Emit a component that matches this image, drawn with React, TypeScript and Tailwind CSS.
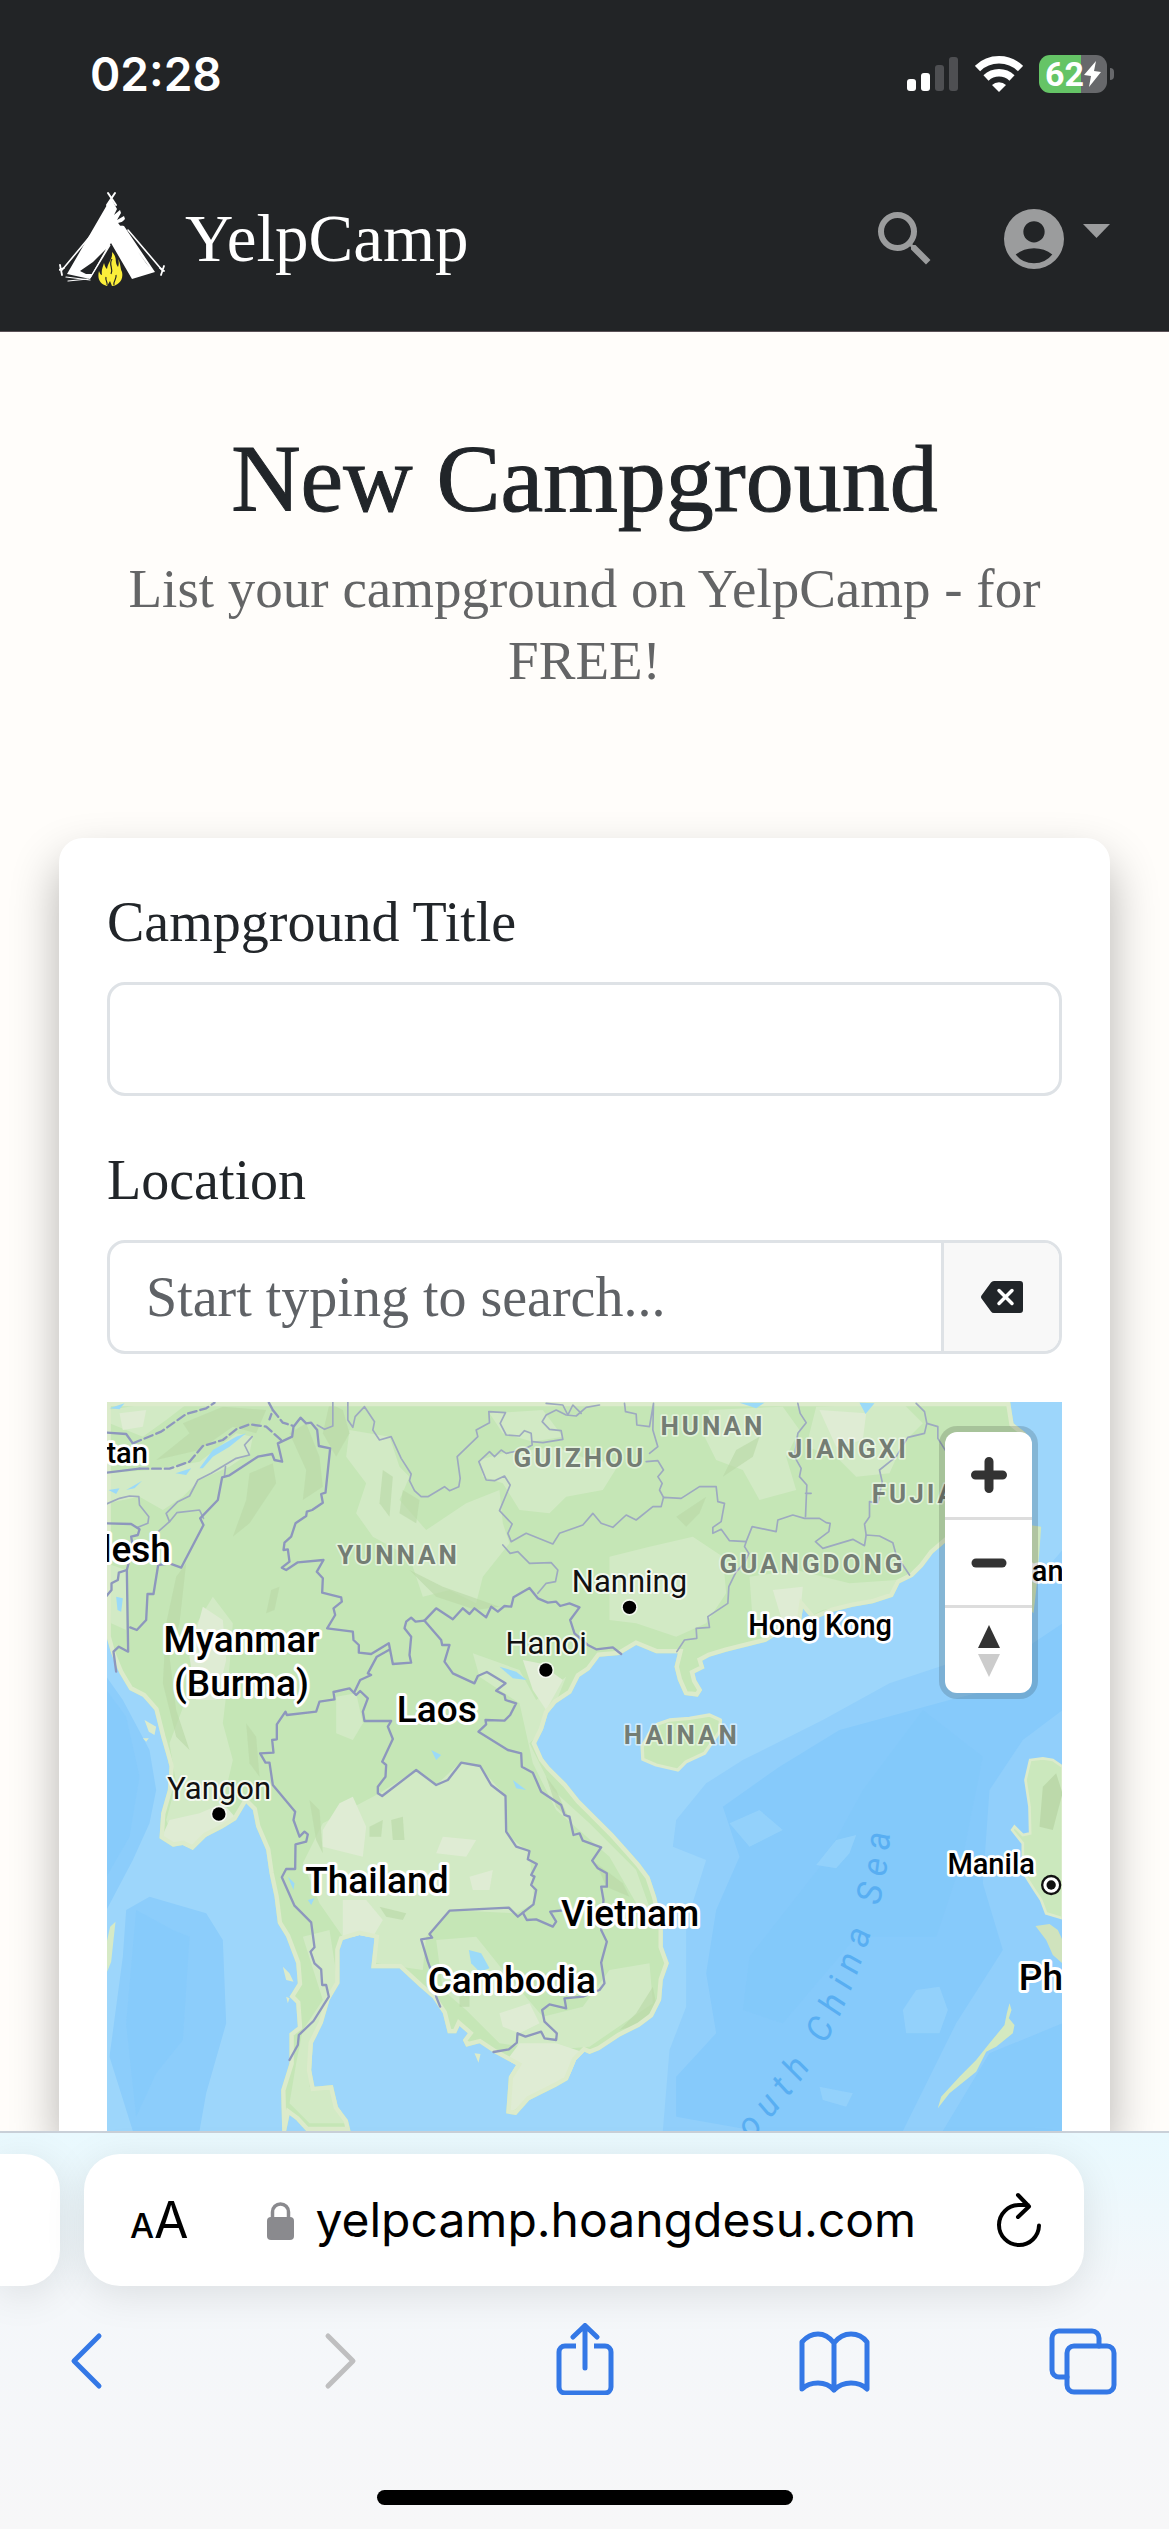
import React from "react";

const LAND =
  "M51,36 L2762,36 L2772,100 L2810,130 L2800,210 L2740,290 L2700,360 L2620,410 L2565,460 L2530,490 L2500,530 L2470,560 L2430,580 L2410,620 L2350,640 L2290,650 L2230,665 L2170,690 L2140,655 L2135,690 L2070,730 L2030,755 L1970,770 L1910,785 L1860,800 L1838,812 L1845,835 L1815,850 L1820,870 L1838,900 L1825,920 L1785,915 L1765,870 L1755,830 L1765,790 L1700,790 L1640,765 L1590,795 L1530,800 L1500,840 L1470,860 L1445,910 L1400,940 L1375,970 L1360,1020 L1340,1060 L1360,1105 L1380,1130 L1430,1180 L1470,1230 L1500,1260 L1570,1330 L1615,1380 L1650,1420 L1680,1460 L1700,1520 L1720,1610 L1720,1670 L1738,1720 L1720,1770 L1715,1830 L1690,1880 L1650,1910 L1590,1940 L1530,1980 L1500,1992 L1485,1985 L1460,2010 L1435,2070 L1400,2090 L1320,2130 L1280,2175 L1250,2170 L1258,2060 L1280,2025 L1215,1990 L1170,1960 L1130,1970 L1120,1950 L1135,1930 L1110,1908 L1100,1930 L1075,1930 L1060,1870 L1030,1825 L990,1790 L930,1735 L845,1735 L855,1645 L810,1635 L760,1650 L750,1680 L750,1780 L720,1830 L700,1900 L670,1960 L665,2040 L675,2090 L730,2085 L745,2150 L775,2190 L783,2223 L650,2223 L620,2190 L600,2175 L590,2223 L578,2223 L575,2100 L600,2020 L600,1930 L625,1910 L620,1840 L600,1820 L625,1780 L620,1720 L590,1640 L565,1600 L555,1520 L540,1450 L530,1380 L500,1310 L490,1260 L470,1240 L440,1290 L400,1315 L350,1340 L310,1380 L280,1365 L250,1370 L210,1345 L215,1270 L235,1200 L240,1130 L235,1110 L215,1040 L195,960 L160,920 L120,900 L90,850 L65,790 L51,740 Z";

const HAINAN =
  "M1705,1002 L1740,990 L1800,985 L1860,975 L1893,990 L1890,1025 L1845,1090 L1790,1115 L1765,1140 L1700,1125 L1660,1108 L1658,1070 L1680,1030 Z";

const LUZON =
  "M2822,1110 L2860,1105 L2890,1110 L2919,1130 L2919,1585 L2870,1570 L2855,1530 L2835,1500 L2800,1445 L2800,1360 L2768,1320 L2775,1310 L2800,1335 L2822,1330 L2820,1250 L2808,1170 Z";

const LIGHT = [
  "M51,60 L190,40 L300,36 L230,90 L160,140 L60,100 Z",
  "M51,250 L180,240 L330,215 L440,130 L490,140 L480,190 L420,230 L330,270 L280,320 L220,360 L150,320 L51,340 Z",
  "M51,520 L110,540 L110,720 L65,700 Z",
  "M780,120 L900,140 L930,230 L960,260 L930,330 L1010,420 L1130,340 L1230,300 L1240,400 L1260,460 L1180,560 L1160,640 L1080,600 L1000,620 L960,500 L850,440 L800,370 L830,280 L770,200 Z",
  "M1170,210 L1240,190 L1400,170 L1500,210 L1590,220 L1540,300 L1430,320 L1380,370 L1290,360 L1240,280 L1180,260 Z",
  "M1200,70 L1360,60 L1420,140 L1330,155 L1240,130 Z",
  "M1860,60 L2080,50 L2130,120 L2090,200 L2120,300 L2010,330 L1960,240 L1880,210 L1840,130 Z",
  "M2180,50 L2440,40 L2500,100 L2440,160 L2400,250 L2300,260 L2240,200 L2150,170 Z",
  "M1560,500 L1680,470 L1810,440 L1900,500 L1910,610 L1850,700 L1760,740 L1640,700 L1560,690 Z",
  "M1980,560 L2120,540 L2280,580 L2420,570 L2400,620 L2200,660 L2080,720 L1990,700 Z",
  "M370,620 L430,700 L420,830 L400,1000 L430,1110 L400,1240 L330,1330 L250,1340 L230,1290 L260,1180 L240,1060 L300,900 L310,720 Z",
  "M700,1300 L870,1210 L980,1140 L1040,1185 L1110,1120 L1170,1130 L1250,1220 L1250,1330 L1320,1390 L1335,1540 L1280,1570 L1080,1560 L1010,1640 L1000,1740 L860,1720 L850,1640 L760,1640 L690,1540 L640,1420 Z",
  "M740,920 L800,910 L820,1000 L790,1050 L740,1030 Z",
  "M640,1640 L720,1620 L745,1780 L690,1900 L660,2090 L730,2100 L770,2200 L660,2200 L600,2140 L620,2020 L640,1920 L700,1830 Z",
  "M1040,1650 L1160,1640 L1240,1740 L1360,1880 L1480,1850 L1560,1740 L1680,1720 L1690,1840 L1500,1970 L1380,1980 L1230,1960 L1130,1860 L1060,1800 Z",
  "M1150,790 L1290,840 L1340,930 L1430,860 L1370,1010 L1320,1060 L1390,1200 L1500,1300 L1640,1440 L1690,1580 L1640,1540 L1560,1400 L1400,1260 L1330,1120 L1290,940 L1170,860 Z",
];

const CREAM = [
  "M750,1240 L790,1220 L830,1310 L820,1400 L700,1370 L700,1320 Z",
  "M760,1530 L830,1530 L880,1590 L850,1640 L760,1640 Z",
  "M1060,1340 L1160,1350 L1130,1400 L1040,1390 Z",
  "M1140,1460 L1210,1440 L1200,1500 L1150,1500 Z",
  "M340,650 L400,690 L410,810 L380,930 L320,930 L300,800 Z",
  "M240,1290 L330,1270 L400,1240 L440,1285 L350,1340 L310,1378 L215,1345 Z",
  "M1260,2000 L1290,1960 L1400,1960 L1490,1990 L1430,2070 L1320,2130 L1260,2170 Z",
  "M1230,1870 L1320,1840 L1350,1900 L1290,1930 L1240,1910 Z",
  "M1300,810 L1350,820 L1420,870 L1370,960 L1330,900 Z",
  "M2050,600 L2140,590 L2130,690 L2080,700 Z",
  "M2190,60 L2330,70 L2320,150 L2240,170 Z",
  "M90,70 L170,60 L160,110 L100,120 Z",
];

const DARK = [
  "M280,100 L400,50 L530,60 L500,130 L430,110 L330,180 L200,210 L300,130 Z",
  "M600,130 L650,100 L690,200 L700,290 L640,330 L650,240 Z",
  "M480,250 L550,220 L560,280 L480,400 L430,440 L470,330 Z",
  "M260,560 L290,520 L270,700 L240,800 L260,960 L300,1080 L260,1040 L220,880 L230,700 Z",
  "M720,40 L760,60 L780,130 L740,200 L700,130 Z",
  "M880,240 L910,260 L900,380 L870,340 Z",
  "M940,300 L990,330 L980,400 L930,370 Z",
  "M960,540 L1060,590 L1230,650 L1160,660 L1040,620 Z",
  "M545,600 L570,590 L555,660 L530,670 Z",
  "M1760,380 L1850,320 L1830,370 L1790,410 Z",
  "M1940,180 L2010,140 L1990,200 L1900,260 Z",
  "M660,1230 L690,1260 L700,1390 L680,1350 Z",
  "M840,1310 L880,1290 L875,1340 L840,1340 Z",
  "M905,1290 L940,1280 L945,1350 L910,1350 Z",
  "M870,1550 L950,1570 L940,1590 L890,1580 Z",
  "M1370,1160 L1400,1200 L1440,1290 L1400,1250 Z",
  "M1520,1420 L1600,1480 L1620,1520 L1550,1490 Z",
  "M1640,1870 L1690,1790 L1700,1840 L1660,1900 L1590,1920 Z",
  "M1110,1820 L1140,1810 L1140,1850 L1110,1850 Z",
  "M470,1000 L500,1040 L510,1160 L480,1120 Z",
];

const WATERS = [
  "M330,235 L370,180 L440,140 L470,130 L420,170 L370,200 L340,235 Z",
  "M258,250 L305,235 L290,255 Z",
  "M57,300 L90,295 L80,312 Z M110,300 L158,272 L135,295 Z",
  "M60,55 L105,40 L90,58 Z",
  "M1138,1680 L1175,1690 L1200,1735 L1170,1745 L1145,1720 Z",
  "M595,1460 L615,1480 L612,1500 Z M655,1530 L675,1525 L665,1545 Z",
  "M1025,1080 L1055,1095 L1040,1110 Z M1270,1170 L1310,1200 L1280,1195 Z",
  "M1230,830 L1280,845 L1312,870 L1270,865 Z",
  "M80,620 L100,625 L95,665 L84,660 Z",
  "M1950,38 L2025,38 L2000,55 Z M2310,38 L2355,40 L2328,72 Z",
];

const COUNTRY = [
  "M51,128 L110,132 L130,160",
  "M51,248 L150,236",
  "M51,400 L125,402 L150,418 L145,435 L125,440 L130,470 L112,540 L116,785 L88,770 L72,785 L80,845",
  "M51,618 L66,600 L66,580 L85,570 L88,548 L112,540",
  "M122,712 L142,720 L170,690 L174,612 L192,612 L206,525",
  "M206,525 L240,520 L275,533 L342,405 L332,385 L385,330 L398,262 L420,256 L505,200 L548,192 L555,210 L578,215 L565,160 L608,140 L612,110 L633,83 L650,100 L665,98 L683,120 L688,168 L722,175 L708,308 L695,312 L700,338 L668,360 L652,365 L650,378 L618,400 L605,440 L585,458 L582,480 L595,478 L600,515 L577,533 L590,540 L625,517 L702,510 L682,545 L700,565 L698,608 L755,622 L757,635 L732,655 L737,675 L713,715 L790,725 L792,750 L808,765 L808,788 L845,792 L898,760 L910,822 L965,818 L960,795 L965,740 L945,715 L950,695 L965,683 L978,695 L1005,692",
  "M1005,692 L1040,655 L1090,688 L1120,655 L1140,672 L1155,655 L1190,682 L1205,650 L1225,665 L1245,648 L1265,650 L1272,622 L1320,594 L1345,625 L1375,638 L1400,635 L1412,648 L1440,640 L1470,652 L1442,690 L1455,730 L1495,765 L1520,778 L1570,772 L1595,792",
  "M1005,692 L1055,750 L1058,765 L1080,765 L1065,815 L1090,850 L1155,880 L1165,858 L1192,846 L1248,880 L1220,902 L1245,915 L1248,930 L1280,940 L1262,975 L1245,992 L1188,990 L1190,1003 L1167,1025 L1255,1080 L1295,1090 L1297,1130 L1330,1148 L1355,1205 L1415,1245 L1425,1275 L1440,1280 L1452,1335 L1470,1330 L1480,1352 L1535,1372 L1508,1412 L1525,1435 L1552,1450 L1552,1490 L1535,1490 L1542,1530 L1535,1620 L1552,1655 L1535,1718 L1545,1780 L1530,1800 L1480,1820 L1425,1825 L1430,1855 L1380,1843 L1358,1860 L1365,1895 L1402,1930 L1400,1950 L1365,1945 L1355,1925 L1308,1940 L1284,1930 L1282,1958 L1258,1978 L1212,1986",
  "M898,780 L862,800 L835,850 L845,855 L812,870 L795,905",
  "M600,2010 L625,1965 L628,1935 L672,1893 L718,1820 L710,1785 L698,1785 L695,1738 L675,1720 L663,1685 L675,1672 L665,1597 L615,1547 L577,1462 L590,1437 L617,1437 L618,1363 L650,1355 L655,1333 L645,1325 L630,1340 L612,1290 L617,1265 L550,1185 L540,1118 L528,1118 L512,1090 L552,1088 L548,1050 L562,1048 L562,1003 L588,965 L592,975 L680,965 L690,935 L735,928 L732,906 L780,895 L800,915 L812,903 L835,925 L820,965 L825,993 L905,993 L895,1010 L910,1047 L878,1115 L890,1125 L888,1160 L865,1190 L865,1210 L878,1218 L980,1140 L1040,1185 L1075,1170 L1115,1118 L1172,1128 L1205,1185 L1248,1218 L1250,1325 L1280,1370 L1320,1383 L1315,1408 L1342,1422 L1325,1455 L1335,1460 L1325,1485 L1340,1500 L1332,1543 L1285,1580 L1258,1553 L1080,1562 L1020,1632 L1028,1643 L995,1648 L1015,1715 L1035,1770 L1040,1820 L1052,1850",
  "M1300,1568 L1312,1590 L1340,1588 L1390,1610 L1400,1595 L1382,1565 L1430,1560",
];

const PROVINCE = [
  "M51,342 L90,325 L120,318 L148,320 L150,345 L178,380 L175,400 L145,412",
  "M206,425 L240,395 L230,370 L265,335 L300,318 L325,270 L365,250 L440,205 L480,195 L465,165 L488,140",
  "M240,395 L262,368 L330,360 L342,385",
  "M408,230 L405,258",
  "M683,105 L705,118 L730,108 L730,36 M775,36 L775,90 L790,112 L797,80 L825,50 L855,95 L850,120 L870,150 L905,140 L935,205 L965,252 L960,272 L975,302 L995,320 L1015,320 L1065,290 L1080,302 L1108,290 L1112,265 L1103,200 L1165,140 L1160,120 L1200,98 L1198,65 L1248,68 L1232,100 L1250,135 L1290,138 L1305,122 L1325,130 L1328,165 L1300,180 L1250,190 L1235,180 L1215,200 L1200,185 L1168,215 L1190,270 L1215,272 L1245,258 L1262,285 L1230,362 L1268,402 L1255,430 L1265,455 L1310,430 L1390,462 L1410,430 L1480,405 L1510,370 L1535,400 L1570,412 L1610,375 L1640,390 L1690,350 L1715,350 L1722,322 L1775,325 L1830,290 L1880,290 L1885,335 L1905,340 L1895,395 L1870,412 L1870,430 L1895,418 L1920,452 L1970,455 L1988,410 L2060,425 L2065,390 L2110,375 L2145,385 L2190,385 L2210,398 L2222,400 L2218,425 L2178,455 L2200,475 L2290,448 L2325,467 L2330,435 L2370,438 L2410,458 L2420,495 L2460,555",
  "M1240,465 L1262,490 L1285,485 L1320,520 L1385,518 L1405,540 L1398,575 L1370,580 L1345,610",
  "M1328,155 L1360,158 L1420,148 L1415,122 L1380,118 L1358,95 L1370,75 L1400,60 L1430,75 L1460,78 L1490,52 L1530,45",
  "M1370,40 L1420,45 L1435,75 L1450,45 L1475,70 M1605,40 L1608,65 L1640,72 L1642,105 L1680,110 L1692,40 L1690,120 L1705,170 L1680,190",
  "M1670,215 L1705,212 L1722,240 L1705,260 L1718,280 L1710,300 L1722,322",
  "M2125,40 L2132,70 L2150,98 L2125,130 L2115,200 L2135,235 L2130,260 L2152,285 L2148,380 M2148,310 L2165,310",
  "M2480,40 L2505,65 L2512,100 L2505,130 L2455,142 L2420,200 L2370,240 L2378,275 L2365,340 L2340,335 L2340,380 L2325,402 L2330,435 M2512,100 L2545,110 L2545,145 L2570,185",
  "M1970,455 L1965,470 L1978,490 L1965,520 L1940,545 L1918,590 L1915,640 L1855,680 L1860,712 L1820,715 L1822,745 L1785,750 L1762,785",
];

type Label = { t: string; x: number; y: number; anchor?: "middle" | "end" };

const COUNTRIES: Label[] = [
  { t: "Myanmar", x: 456, y: 787, anchor: "middle" },
  { t: "(Burma)", x: 456, y: 917, anchor: "middle" },
  { t: "Laos", x: 1042, y: 995, anchor: "middle" },
  { t: "Thailand", x: 862, y: 1510, anchor: "middle" },
  { t: "Vietnam", x: 1622, y: 1608, anchor: "middle" },
  { t: "Cambodia", x: 1267, y: 1808, anchor: "middle" },
  { t: "Philippines", x: 2788, y: 1800 },
  { t: "Bangladesh", x: 244, y: 515, anchor: "end" },
];

const PLACES: Label[] = [
  { t: "Bhutan", x: 175, y: 220, anchor: "end" },
  { t: "Taiwan", x: 2646, y: 572 },
  { t: "Hong Kong", x: 2192, y: 735, anchor: "middle" },
  { t: "Manila", x: 2705, y: 1452, anchor: "middle" },
];

const CITIES: Label[] = [
  { t: "Nanning", x: 1620, y: 605, anchor: "middle" },
  { t: "Hanoi", x: 1370, y: 793, anchor: "middle" },
  { t: "Yangon", x: 389, y: 1227, anchor: "middle" },
];

const REGIONS: Label[] = [
  { t: "YUNNAN", x: 743, y: 523 },
  { t: "GUIZHOU", x: 1272, y: 232 },
  { t: "HUNAN", x: 1713, y: 135 },
  { t: "JIANGXI", x: 2095, y: 205 },
  { t: "FUJIAN", x: 2347, y: 340 },
  { t: "GUANGDONG", x: 1890, y: 550 },
  { t: "HAINAN", x: 1603, y: 1062 },
];

function Labels({ items }: { items: Label[] }) {
  return (
    <>
      {items.map((l) => (
        <text key={l.t} x={l.x} y={l.y} textAnchor={l.anchor ?? "start"}>
          {l.t}
        </text>
      ))}
    </>
  );
}

function Terrain() {
  return (
    <svg
      viewBox="51 36 2868 2187"
      preserveAspectRatio="xMidYMin slice"
      className="block h-full w-full font-[Roboto,sans-serif]"
      role="img"
      aria-label="Map of Southeast Asia"
    >
      <defs>
        <clipPath id="land">
          <path d={LAND} />
        </clipPath>
        <path id="sea" d="M1925,2315 Q2150,2080 2230,1920 T2365,1560 T2390,1200" />
      </defs>
      <rect x="51" y="36" width="2868" height="2187" fill="#9dd6fb" />
      {/* deeper water */}
      <path
        fill="#91cffb"
        d="M2919,480 L2850,560 L2800,720 L2640,800 L2400,880 L2200,990 L1960,1110 L1850,1180 L1760,1290 L1750,1370 L1850,1410 L1790,1600 L1790,1850 L1740,1980 L1720,2223 L2919,2223 Z"
      />
      <path
        fill="#86cafb"
        d="M2919,700 L2830,760 L2700,900 L2580,930 L2250,1020 L2070,1130 L1900,1250 L1950,1400 L1880,1560 L1850,1750 L1880,1930 L1760,2060 L1760,2180 L2000,2223 L2440,2223 L2600,1900 L2740,1680 L2680,1480 L2700,1200 L2800,1050 L2919,960 Z"
      />
      <path fill="#82c8fa" d="M2500,960 L2680,1100 L2620,1400 L2540,1640 L2300,1640 L2080,1900 L1960,1860 L1980,1700 L2200,1420 L2320,1200 Z" opacity=".6" />
      <path fill="#84c9fb" d="M2560,2223 L2700,1990 L2919,1900 L2919,2223 Z" opacity=".8" />
      <path fill="#97d3fb" d="M2180,1425 L2240,1350 L2300,1335 L2280,1390 L2240,1435 Z M2440,1860 L2480,1800 L2550,1790 L2575,1860 L2550,1930 L2450,1930 Z M1920,1300 L2010,1260 L2080,1320 L1980,1370 Z M2190,2090 L2290,2110 L2270,2150 L2200,2130 Z" opacity=".75" />
      <path
        fill="#8ccdfb"
        d="M51,860 L100,930 L180,1080 L200,1200 L180,1300 L130,1410 L51,1560 Z M110,1560 L180,1520 L350,1570 L400,1650 L410,1900 L350,2110 L330,2223 L130,2223 L60,2000 L100,1700 Z"
      />
      <path fill="#84c9fb" d="M51,900 L110,980 L150,1160 L120,1340 L51,1460 Z M140,1560 L250,1620 L300,1640 L280,1950 L200,2050 L140,2180 L110,1900 Z" opacity=".6" />

      <path d={LAND} fill="#c5e6b6" />
      <g clipPath="url(#land)">
        {LIGHT.map((d) => (
          <path key={d} d={d} fill="#d2eac5" />
        ))}
        {CREAM.map((d) => (
          <path key={d} d={d} fill="#dfecd4" />
        ))}
        {DARK.map((d) => (
          <path key={d} d={d} fill="#bad8a8" opacity=".65" />
        ))}
        <path d={LAND} fill="none" stroke="#dcebcb" strokeWidth="26" />
        {WATERS.map((d) => (
          <path key={d} d={d} fill="#9bdaf8" />
        ))}
      </g>
      <path d={HAINAN} fill="#c8e7b8" stroke="#dcebcb" strokeWidth="10" strokeLinejoin="round" />
      <path d={LUZON} fill="#cbe8bd" stroke="#dcebcb" strokeWidth="8" />
      <path d="M2860,1190 L2900,1150 L2919,1210 L2890,1320 L2850,1310 Z" fill="#bcd9aa" />
      <path d="M2838,1608 L2880,1602 L2905,1620 L2919,1650 L2919,1720 L2890,1695 L2870,1650 Z" fill="#d0e3bd" />
      <path d="M2760,1840 L2766,1860 L2758,1885 L2775,1905 L2770,1930 L2720,1970 L2690,1985 L2660,2045 L2580,2110 L2545,2155 L2555,2120 L2610,2060 L2660,2010 L2700,1960 L2745,1905 L2752,1870 Z" fill="#d4e9c0" />
      <path d="M2820,405 L2855,410 L2850,480 L2840,600 L2832,670 L2800,640 L2790,500 Z" fill="#cfe7be" />
      <path d="M78,1595 L72,1650 L65,1715 L53,1745 L51,1660 L62,1610 Z" fill="#d6eac6" />
      <path d="M580,1730 L600,1750 L612,1775 L590,1770 Z M590,1820 L600,1825 L595,1840 Z M1155,1990 L1173,1992 L1167,2018 Z M165,990 L200,1010 L195,1035 L178,1025 Z M160,1045 L178,1045 L170,1055 Z" fill="#dcebcb" />

      <g fill="none" strokeLinejoin="round" strokeLinecap="round">
        {PROVINCE.map((d) => (
          <path key={d} d={d} stroke="#9da9c0" strokeWidth="5" />
        ))}
        {COUNTRY.map((d) => (
          <path key={d} d={d} stroke="#8d97bd" strokeWidth="7" />
        ))}
        <path
          d="M150,236 L240,236 L300,215 L340,168 L400,150 L440,118 L480,103 L530,110 L580,155 M130,160 L215,125 L290,72 L350,55 L375,38 M538,38 L550,60 L540,88 M550,60 L580,98 L612,108"
          stroke="#8d97bd"
          strokeWidth="7"
          strokeDasharray="26 12"
        />
      </g>

      <g stroke="#ffffff" strokeLinejoin="round" className="[paint-order:stroke]">
        <g fill="#747d74" strokeWidth="10" strokeOpacity=".5" fontSize="78" fontWeight="700" className="tracking-[9px]">
          <Labels items={REGIONS} />
        </g>
        <g fill="#111111" strokeWidth="12" strokeOpacity=".75" fontSize="93">
          <Labels items={CITIES} />
        </g>
        <g fill="#000000" strokeWidth="16" fontSize="87" fontWeight="500">
          <Labels items={PLACES} />
        </g>
        <g fill="#000000" strokeWidth="18" fontSize="111" fontWeight="500">
          <Labels items={COUNTRIES} />
        </g>
        <g fill="#000000" strokeWidth="10" strokeOpacity=".7">
          <circle cx="1620" cy="652" r="20" />
          <circle cx="1369" cy="840" r="20" />
          <circle cx="388" cy="1272" r="20" />
        </g>
      </g>
      <circle cx="2885" cy="1485" r="27" fill="#ffffff" stroke="#111111" strokeWidth="7" />
      <circle cx="2885" cy="1485" r="14" fill="#111111" />
      <text fill="#58aef2" fontSize="105" fontWeight="400" fontStyle="italic" className="tracking-[27px]">
        <textPath href="#sea">South China Sea</textPath>
      </text>
    </svg>
  );
}

function TentLogo() {
  return (
    <svg viewBox="59 189 106 96" className="h-24 w-[106px]" aria-hidden="true">
      <g stroke="#fff" strokeLinecap="round" fill="none">
        <path d="M108,191 L116,203 M115,191 L107,203" strokeWidth="2" />
        <path d="M97,226 L62,268 M128,228 L162,268" strokeWidth="1.6" />
        <path d="M60,263 L62,273 M164,264 L161,273 M59,268 L64,266 M160,266 L164,269" strokeWidth="1.8" />
        <path d="M66,275 L90,278 M68,279 L88,277" strokeWidth="1.2" />
      </g>
      <path
        fill="#fff"
        d="M111,196 L117,207 L114,213 L120,208 L121,211 L117,218 L124,214 L125,217 L119,223 L124,224 L155,270 L132,277 L111,241 L90,277 L67,272 Z"
      />
      <path fill="#222426" d="M106,247 L92,272 L86,272 L80,269 L93,260 Z M138,250 L150,266 L146,261 Z M118,221 L125,219 L121,224 Z" />
      <path stroke="#fff" strokeWidth="1.4" d="M110,243 L90,276" />
      <path
        fill="#fbee3a"
        d="M112,250 C118,256 114,260 118,265 C119,262 119,260 118,257 C121,262 120,266 122,270 C124,279 117,284 112,284 L110,279 L107,284 C100,282 97,277 99,269 C100,272 101,273 102,273 C101,268 103,265 104,261 C105,265 106,266 107,267 C108,260 113,257 112,250 Z"
      />
      <path fill="none" stroke="#222426" strokeWidth="1.2" d="M112,257 C108,263 114,266 111,272 M106,275 C105,279 108,280 107,283 M116,273 C117,277 113,279 114,283" />
    </svg>
  );
}

function StatusBar() {
  return (
    <div className="flex h-[148px] items-center justify-between pr-[55px] pl-[90px] font-[Inter,sans-serif] text-white">
      <time className="text-[46px] font-semibold">02:28</time>
      <div className="flex items-center gap-4">
        <svg viewBox="0 0 52 36" className="h-9 w-[52px]" aria-label="Cellular signal">
          <rect x="0" y="23" width="9" height="12" rx="3" fill="#fff" />
          <rect x="14" y="17" width="9" height="18" rx="3" fill="#fff" />
          <rect x="28" y="9" width="9" height="26" rx="3" fill="#4e4f52" />
          <rect x="42" y="1" width="9" height="34" rx="3" fill="#4e4f52" />
        </svg>
        <svg viewBox="0 0 48 36" className="h-9 w-12" aria-label="Wi-Fi">
          <g fill="none" stroke="#fff" strokeWidth="7.500">
            <path d="M2.500,12.500 A31,31 0 0 1 45.500,12.500" />
            <path d="M11,22 A19,19 0 0 1 37,22" />
          </g>
          <path d="M17,29 A10,10 0 0 1 31,29 L24,36 Z" fill="#fff" />
        </svg>
        <div className="flex items-center gap-[3px]">
          <div className="flex h-[38px] w-[68px] items-center justify-center rounded-[11px] bg-linear-to-r from-[#65c466] from-62% to-[#67686b] to-62%">
            <span className="font-[Roboto,sans-serif] text-[34px] font-bold">62</span>
            <svg viewBox="0 0 17 26" className="h-[26px] w-[17px]" aria-label="Charging">
              <path d="M12,0 L0,14 L7,15 L5,26 L17,11 L10,10 Z" fill="#fff" />
            </svg>
          </div>
          <div className="h-3 w-1 rounded-r-full bg-[#67686b]" />
        </div>
      </div>
    </div>
  );
}

function NavBar() {
  return (
    <nav className="flex h-[183px] items-center justify-between px-[59px] pb-[2px]">
      <a href="#" className="flex items-center gap-5 text-white">
        <TentLogo />
        <span className="text-[67px] leading-none">YelpCamp</span>
      </a>
      <div className="flex items-center text-[#9b9c9d]">
        <button type="button" aria-label="Search">
          <svg viewBox="0 0 24 24" className="size-[72px]" fill="currentColor">
            <path d="M15.500 14h-.79l-.28-.27A6.471 6.471 0 0 0 16 9.500 6.500 6.500 0 1 0 9.500 16c1.610 0 3.090-.59 4.230-1.570l.27.28v.79l5 4.990L20.490 19l-4.990-5zm-6 0C7.010 14 5 11.990 5 9.500S7.010 5 9.500 5 14 7.010 14 9.500 11.990 14 9.500 14z" />
          </svg>
        </button>
        <button type="button" aria-label="Account" className="ml-[57px] flex items-center gap-[13px]">
          <svg viewBox="0 0 24 24" className="size-[72px]" fill="currentColor" fillRule="evenodd">
            <path d="M12 2a10 10 0 1 0 0 20 10 10 0 0 0 0-20z M12 6.050a3.550 3.550 0 1 1 0 7.100 3.550 3.550 0 0 1 0-7.100z M5.900 17.200Q8.500 15.100 12 15.100T18.100 17.200Q15.800 20.100 12 20.100T5.900 17.200z" />
          </svg>
          <svg viewBox="0 0 27 14" className="mb-4 h-[14px] w-[27px]" fill="currentColor">
            <path d="M0 0h27L13.500 14z" />
          </svg>
        </button>
      </div>
    </nav>
  );
}

function MapControls() {
  return (
    <div className="absolute top-[30px] right-[30px] flex w-[87px] flex-col divide-y-[3px] divide-[#dddddd] rounded-xl bg-white shadow-[0_0_0_6px_rgba(0,0,0,0.15)]">
      <button type="button" aria-label="Zoom in" className="flex h-[88px] items-center justify-center">
        <svg viewBox="0 0 36 36" className="size-9">
          <path d="M18 4.500v27M4.500 18h27" stroke="#333" strokeWidth="9" strokeLinecap="round" />
        </svg>
      </button>
      <button type="button" aria-label="Zoom out" className="flex h-[88px] items-center justify-center">
        <svg viewBox="0 0 36 36" className="size-9">
          <path d="M5 18h26" stroke="#333" strokeWidth="9" strokeLinecap="round" />
        </svg>
      </button>
      <button type="button" aria-label="Reset bearing to north" className="flex h-[85px] items-center justify-center">
        <svg viewBox="0 0 24 52" className="h-[52px] w-6">
          <path d="M12 0L23 23H1z" fill="#333" />
          <path d="M12 52L1 29h22z" fill="#ccc" />
        </svg>
      </button>
    </div>
  );
}

function CampgroundForm() {
  return (
    <form className="mx-[59px] rounded-t-3xl bg-white px-12 pt-12 shadow-[0_24px_48px_rgba(0,0,0,0.30)]">
      <label htmlFor="title" className="block text-[56px] leading-[72px] text-[#212529]">
        Campground Title
      </label>
      <input id="title" type="text" className="mt-6 block h-[114px] w-full rounded-[18px] border-[3px] border-[#dee2e6] px-9 text-[56px]" />
      <label htmlFor="location" className="mt-12 block text-[56px] leading-[72px] text-[#212529]">
        Location
      </label>
      <div className="mt-6 flex h-[114px] overflow-hidden rounded-[18px] border-[3px] border-[#dee2e6]">
        <input
          id="location"
          type="text"
          placeholder="Start typing to search..."
          className="min-w-0 flex-1 px-9 text-[56px] text-[#212529] outline-none placeholder:text-[#5f6266]"
        />
        <button type="button" aria-label="Clear location" className="flex w-[118px] items-center justify-center border-l-[3px] border-[#dee2e6] bg-[#f8f8f8]">
          <svg viewBox="0 0 42 32" className="h-8 w-[42px]">
            <path d="M13 0h26a3 3 0 0 1 3 3v26a3 3 0 0 1-3 3H13q-2 0-3-1.500L.5 17.500q-1-1.500 0-3L10 1.500Q11 0 13 0z" fill="#212529" />
            <path d="M18 9.500l13 13M31 9.500l-13 13" stroke="#fff" strokeWidth="3.500" strokeLinecap="round" />
          </svg>
        </button>
      </div>
      <div className="relative mt-12 h-[729px] overflow-hidden">
        <Terrain />
        <MapControls />
      </div>
    </form>
  );
}

function ToolIcon({ label, color, children }: { label: string; color: string; children: React.ReactNode }) {
  return (
    <button type="button" aria-label={label}>
      <svg viewBox="0 0 72 72" className="size-[72px]" fill="none" stroke={color} strokeWidth="5" strokeLinecap="round" strokeLinejoin="round">
        {children}
      </svg>
    </button>
  );
}

function BrowserBar() {
  return (
    <footer className="relative border-t-2 border-[#c9d0d8] bg-linear-to-b from-[#e9f9fe] via-[#f4f7fa] via-40% to-[#f7f7f8] pb-6 font-[Inter,sans-serif]">
      <div className="flex gap-6 pt-[21px] pr-[85px]">
        <div className="h-[132px] w-[60px] rounded-r-[36px] bg-white shadow-[0_8px_40px_rgba(0,0,0,0.10)]" />
        <div className="flex h-[132px] flex-1 items-center justify-between rounded-[36px] bg-white pr-[41px] pl-[46px] text-black shadow-[0_8px_40px_rgba(0,0,0,0.10)]">
          <button type="button" aria-label="Page settings" className="flex items-baseline">
            <span className="text-[34px] font-medium">A</span>
            <span className="text-[50px]">A</span>
          </button>
          <button type="button" className="flex items-center gap-[21px]">
            <svg viewBox="0 0 27 39" className="h-[39px] w-[27px]" aria-label="Secure">
              <rect x="0" y="16" width="27" height="23" rx="4" fill="#8a8a8e" />
              <path d="M5.500 17v-6a8 8 0 0 1 16 0v6" fill="none" stroke="#8a8a8e" strokeWidth="3.500" />
            </svg>
            <span className="text-[48px] leading-none">yelpcamp.hoangdesu.com</span>
          </button>
          <button type="button" aria-label="Reload">
            <svg viewBox="0 0 48 56" className="h-14 w-12" fill="none" stroke="#000" strokeWidth="4" strokeLinecap="round" strokeLinejoin="round">
              <path d="M44 33.500A20 20 0 1 1 24 13H33M23 3L34 14.500 23 25" />
            </svg>
          </button>
        </div>
      </div>
      <div className="flex justify-between px-12 pt-[37px]">
        <ToolIcon label="Back" color="#3478e6">
          <path d="M51 13L26 38l25 25" />
        </ToolIcon>
        <ToolIcon label="Forward" color="#bfbfc0">
          <path d="M30 13l25 25-25 25" />
        </ToolIcon>
        <ToolIcon label="Share" color="#3478e6">
          <path strokeLinecap="butt" d="M27 23H16a6 6 0 0 0-6 6v35a6 6 0 0 0 6 6h40a6 6 0 0 0 6-6V29a6 6 0 0 0-6-6H45" />
          <path d="M36 45V3M24 14L36 2.500 48 14" />
        </ToolIcon>
        <ToolIcon label="Bookmarks" color="#3478e6">
          <path d="M35 20Q28 11 19 11T3 19V66Q9 60 19 60T35 67Q42 60 52 60T68 66V19Q62 11 52 11T35 20zM35 20V67" />
        </ToolIcon>
        <ToolIcon label="Tabs" color="#3478e6">
          <rect x="18" y="23" width="47" height="46" rx="7" />
          <path d="M18 54H10a7 7 0 0 1-7-7V15a7 7 0 0 1 7-7h33a7 7 0 0 1 7 7v8" />
        </ToolIcon>
      </div>
      <div className="mx-auto mt-[95px] h-[15px] w-[416px] rounded-full bg-black" />
    </footer>
  );
}

export default function App() {
  return (
    <div className="overflow-hidden bg-[#fffdfa] font-['Liberation_Serif',serif]">
      <header className="border-b border-[#5a5056] bg-[#222426]">
        <StatusBar />
        <NavBar />
      </header>
      <main>
        <div className="px-12 pt-[97px] pb-[141px] text-center">
          <h1 className="text-[96px] leading-[100px] text-[#212529] [-webkit-text-stroke:1px_#212529]">New Campground</h1>
          <p className="mx-auto mt-6 max-w-[960px] text-[55px] leading-[72px] text-[#646566]">
            List your campground on YelpCamp - for FREE!
          </p>
        </div>
        <CampgroundForm />
      </main>
      <BrowserBar />
    </div>
  );
}
